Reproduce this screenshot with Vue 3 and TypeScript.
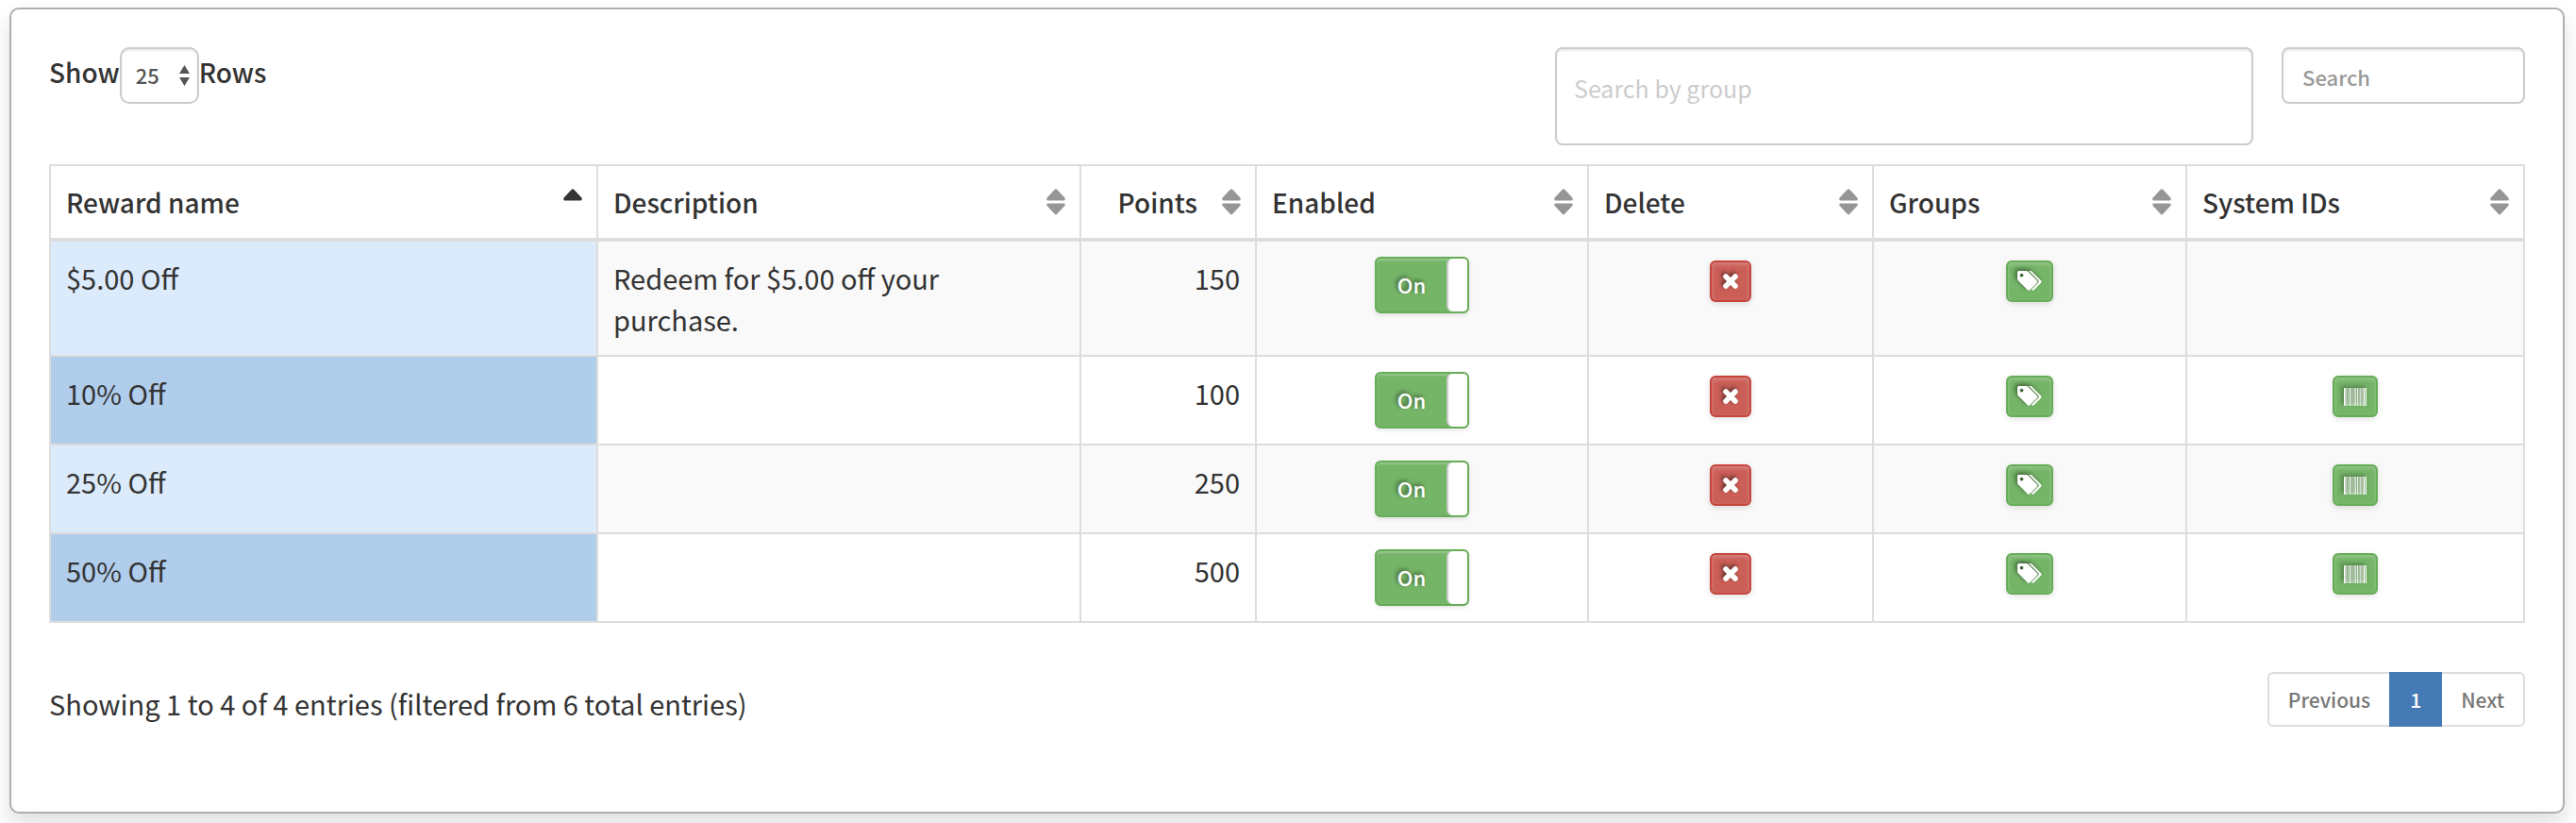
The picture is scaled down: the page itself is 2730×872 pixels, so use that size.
<script setup lang="ts">
import { ref } from 'vue'

interface Column {
  key: string
  label: string
  share: number
  numeric?: boolean
  sorted?: boolean
}

interface Reward {
  name: string
  description: string
  points: number
  enabled: boolean
  hasSystemIds: boolean
}

const columns: Column[] = [
  { key: 'name', label: 'Reward name', share: 580, sorted: true },
  { key: 'description', label: 'Description', share: 512 },
  { key: 'points', label: 'Points', share: 186, numeric: true },
  { key: 'enabled', label: 'Enabled', share: 352 },
  { key: 'delete', label: 'Delete', share: 302 },
  { key: 'groups', label: 'Groups', share: 332 },
  { key: 'system', label: 'System IDs', share: 358 },
]
const totalShare = columns.reduce((sum, c) => sum + c.share, 0)

const rewards = ref<Reward[]>([
  { name: '$5.00 Off', description: 'Redeem for $5.00 off your purchase.', points: 150, enabled: true, hasSystemIds: false },
  { name: '10% Off', description: '', points: 100, enabled: true, hasSystemIds: true },
  { name: '25% Off', description: '', points: 250, enabled: true, hasSystemIds: true },
  { name: '50% Off', description: '', points: 500, enabled: true, hasSystemIds: true },
])

const pageSize = ref('25')
const groupQuery = ref('')
const query = ref('')

const bars = [
  { x: 0, w: 1, o: 1 }, { x: 1, w: 2, o: 0.5 }, { x: 4, w: 1, o: 0.4 }, { x: 6, w: 1, o: 0.9 },
  { x: 7, w: 4, o: 0.2 }, { x: 11, w: 1, o: 0.4 }, { x: 12, w: 1, o: 0.7 }, { x: 14, w: 1, o: 0.8 },
  { x: 15, w: 2, o: 0.2 }, { x: 17, w: 1, o: 0.6 }, { x: 18, w: 3, o: 0.25 }, { x: 21, w: 1, o: 1 },
  { x: 23, w: 1, o: 0.95 },
]
</script>

<template>
  <main class="card">
    <div class="toolbar">
      <div class="length">
        <label for="page-size">Show</label>
        <span class="select-wrap">
          <select id="page-size" v-model="pageSize" class="field">
            <option>10</option>
            <option>25</option>
            <option>50</option>
          </select>
          <svg class="select-arrows" width="11" height="22" viewBox="0 0 11 22" aria-hidden="true">
            <path d="M5.500 0 11 9H0zM0 13h11l-5.500 9z" fill="#555" />
          </svg>
        </span>
        <span class="rows">Rows</span>
      </div>
      <div class="filters">
        <input v-model="groupQuery" class="field group-search" type="text" placeholder="Search by group" aria-label="Search by group">
        <input v-model="query" class="field search" type="search" placeholder="Search" aria-label="Search">
      </div>
    </div>

    <table>
      <colgroup>
        <col v-for="c in columns" :key="c.key" :style="{ width: (c.share / totalShare) * 100 + '%' }">
      </colgroup>
      <thead>
        <tr>
          <th v-for="c in columns" :key="c.key" scope="col" :aria-sort="c.sorted ? 'ascending' : undefined">
            <button type="button" class="sort" :class="{ numeric: c.numeric }">
              {{ c.label }}
              <svg width="20" height="28" viewBox="0 0 20 28" aria-hidden="true" :fill="c.sorted ? '#333' : '#969696'">
                <path d="M8.800.8Q10-.4 11.200.8L19.400 9.500Q20.500 12 18.500 12.500H1.500Q-.5 12 .6 9.500z" />
                <path v-if="!c.sorted" d="M1.500 15.500H18.500Q20.500 16 19.400 18L11.200 26.800Q10 28 8.800 26.800L.6 18Q-.5 16 1.500 15.500z" />
              </svg>
            </button>
          </th>
        </tr>
      </thead>
      <tbody>
        <tr v-for="r in rewards" :key="r.name">
          <td class="name">{{ r.name }}</td>
          <td class="description">{{ r.description }}</td>
          <td class="points">{{ r.points }}</td>
          <td>
            <button type="button" class="toggle" role="switch" :aria-checked="r.enabled" :aria-label="'Enable ' + r.name" @click="r.enabled = !r.enabled">
              <span class="toggle-on">On</span>
              <span class="toggle-handle"></span>
            </button>
          </td>
          <td>
            <button type="button" class="action danger" :aria-label="'Delete ' + r.name">
              <svg width="16" height="16" viewBox="0 0 16 16" aria-hidden="true">
                <path d="M3 3l10 10M13 3L3 13" stroke="#fff" stroke-width="5.600" stroke-linecap="round" />
              </svg>
            </button>
          </td>
          <td>
            <button type="button" class="action tags" :aria-label="'Groups for ' + r.name">
              <svg width="26" height="22" viewBox="0 0 26 22" aria-hidden="true" fill="#fff">
                <path fill-rule="evenodd" d="M1.500 0H9.500Q10.600 0 11.500.9L20.800 10.200Q21.900 11.500 20.800 12.700L13.200 20.200Q12 21.200 10.800 20.200L1 10.400Q0 9.400 0 8.300V1.500Q0 0 1.500 0zM4.500 2.700a1.900 1.900 0 1 0 0 3.800a1.900 1.900 0 0 0 0-3.800z" />
                <path d="M12 0h1.700Q14.800 0 15.700.9L25 10.200Q26.100 11.500 25 12.700L17.500 20.200Q16.300 21.300 15.200 20.100L14.900 19.700 22.300 12.600Q23.200 11.500 22.300 10.300z" />
              </svg>
            </button>
          </td>
          <td>
            <button v-if="r.hasSystemIds" type="button" class="action barcode" :aria-label="'System IDs for ' + r.name">
              <svg width="24" height="19" viewBox="0 0 24 19" aria-hidden="true" fill="#fff">
                <rect width="24" height="19" opacity="0.3" />
                <rect v-for="b in bars" :key="b.x" :x="b.x" y="0" :width="b.w" height="19" :opacity="b.o" />
              </svg>
            </button>
          </td>
        </tr>
      </tbody>
    </table>

    <div class="footer">
      <p class="info" role="status">Showing 1 to 4 of 4 entries (filtered from 6 total entries)</p>
      <nav class="pagination" aria-label="Table pages">
        <a href="#">Previous</a>
        <a href="#" class="current" aria-current="page">1</a>
        <a href="#">Next</a>
      </nav>
    </div>
  </main>
</template>

<style>
body {
  margin: 0;
  background: #fff;
}
</style>

<style scoped>
.card,
.card * {
  box-sizing: border-box;
}

.card {
  margin: 8px 12px 10px 10px;
  padding: 40px 40px 90px;
  border: 2px solid #aab2af;
  border-radius: 10px;
  background: #fff;
  box-shadow: 0 12px 24px rgba(0, 0, 0, 0.13);
  color: #333;
  font-family: "Noto Sans CJK SC", "Open Sans", sans-serif;
  font-size: 29px;
  line-height: 44px;
}

button,
input,
select {
  margin: 0;
  font-family: inherit;
}

.toolbar {
  display: flex;
  justify-content: space-between;
  align-items: flex-start;
  margin-bottom: 20px;
}

.length {
  display: flex;
  font-size: 28px;
  font-weight: 500;
}

.length label,
.rows {
  padding-top: 4px;
}

.select-wrap {
  position: relative;
}

.field {
  display: block;
  height: 60px;
  padding: 2px 20px 0;
  border: 2px solid #ccc;
  border-radius: 8px;
  background: #fff;
  box-shadow: inset 0 2px 2px rgba(0, 0, 0, 0.075);
  color: #555;
  font-size: 22px;
  outline: 0;
}

select.field {
  width: 84px;
  padding: 0 15px 2px;
  border-radius: 10px;
  font-weight: 500;
  appearance: none;
}

.select-arrows {
  position: absolute;
  top: 19px;
  right: 10px;
  pointer-events: none;
}

.filters {
  display: flex;
  gap: 30px;
  align-items: flex-start;
}

.group-search {
  width: 740px;
  height: 104px;
  padding: 0 18px 18px;
  font-size: 25px;
}

.group-search::placeholder {
  color: #ccc;
  opacity: 1;
}

.search {
  width: 258px;
  font-weight: 500;
  appearance: none;
}

.search::placeholder {
  color: #999;
  opacity: 1;
}

table {
  width: 100%;
  table-layout: fixed;
  border-collapse: separate;
  border-spacing: 0;
  border: solid #ddd;
  border-width: 2px 0 0 2px;
}

th,
td {
  padding: 16px;
  border: solid #ddd;
  border-width: 0 2px 2px 0;
  text-align: center;
  vertical-align: top;
}

th {
  padding-right: 15px;
  border-bottom-width: 4px;
}

.sort {
  display: flex;
  justify-content: space-between;
  align-items: center;
  width: 100%;
  padding: 0;
  border: 0;
  background: none;
  color: inherit;
  font-size: 28px;
  font-weight: 500;
  line-height: 44px;
}

.sort.numeric {
  justify-content: flex-end;
  gap: 26px;
}

.name,
.description {
  text-align: left;
}

.points {
  text-align: right;
}

tbody tr:nth-child(odd) td {
  background: #f9f9f9;
}

tbody tr:nth-child(odd) .name {
  background: #dcebfc;
}

tbody tr:nth-child(even) .name {
  background: #b0cdec;
}

.toggle {
  display: flex;
  width: 100px;
  height: 60px;
  margin: 0 auto;
  padding: 0;
  border: 2px solid #67ad59;
  border-radius: 6px;
  background: #75b568;
  box-shadow: inset 0 2px 2px rgba(255, 255, 255, 0.25), 0 2px 4px rgba(0, 0, 0, 0.1);
  color: #fff;
  overflow: hidden;
}

.toggle-on {
  flex: 1;
  font-size: 22px;
  font-weight: 500;
  line-height: 54px;
  text-shadow: -2px -2px 4px rgba(0, 0, 0, 0.5);
}

.toggle-handle {
  width: 22px;
  height: 56px;
  border-left: 2px solid #ccc;
  border-radius: 6px 4px 4px 6px;
  background: #fff;
}

.action {
  display: flex;
  justify-content: center;
  align-items: center;
  width: 50px;
  height: 44px;
  margin: 4px auto 0;
  padding: 0;
  border: 2px solid #67ad59;
  border-radius: 6px;
  background: #75b568;
  box-shadow: inset 0 2px 4px rgba(255, 255, 255, 0.25), 0 2px 6px rgba(0, 0, 0, 0.12);
}

.action svg {
  filter: drop-shadow(-2px -2px 2px rgba(0, 0, 0, 0.5));
}

.danger {
  width: 44px;
  border-color: #c6453f;
  background: #cb5f58;
}

.barcode {
  width: 48px;
}

.footer {
  display: flex;
  justify-content: space-between;
  align-items: flex-start;
  margin-top: 52px;
}

.info {
  margin: 0;
  padding-top: 11px;
}

.pagination {
  display: flex;
  font-size: 21px;
  font-weight: 500;
  line-height: 54px;
}

.pagination a {
  padding: 0 20px;
  border: solid #ddd;
  border-width: 2px 0;
  color: #777;
  text-decoration: none;
}

.pagination a:first-child {
  border-left-width: 2px;
  border-radius: 6px 0 0 6px;
}

.pagination a:last-child {
  border-right-width: 2px;
  border-radius: 0 6px 6px 0;
}

.pagination .current {
  padding: 0 22px;
  border-color: #467ab5;
  background: #467ab5;
  color: #fff;
}
</style>
